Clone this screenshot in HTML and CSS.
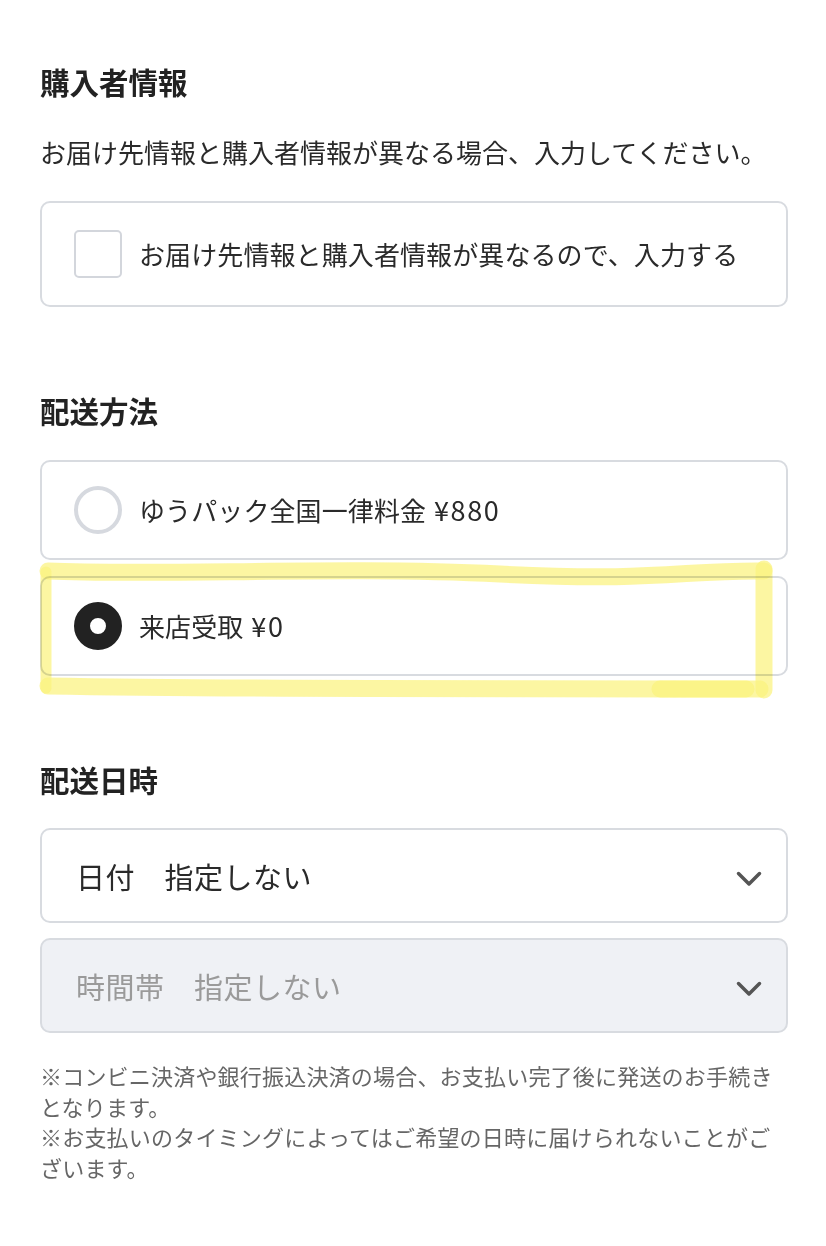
FILE: index.html
```html
<!DOCTYPE html>
<html lang="ja">
<head>
  <meta charset="UTF-8">
  <meta name="viewport" content="width=device-width, initial-scale=1.0">
  <title>購入手続き</title>
  <link rel="stylesheet" href="styles.css">
</head>
<body>

<main class="checkout">

  <!-- 購入者情報 -->
  <section class="block block-buyer">
    <h2 class="block-title">購入者情報</h2>
    <p class="block-desc">お届け先情報と購入者情報が異なる場合、入力してください。</p>
    <label class="option">
      <input type="checkbox" class="check">
      <span class="option-text">お届け先情報と購入者情報が異なるので、入力する</span>
    </label>
  </section>

  <!-- 配送方法 -->
  <section class="block">
    <h2 class="block-title">配送方法</h2>
    <div class="option-list">
      <label class="option">
        <input type="radio" name="delivery" class="radio">
        <span class="option-text">ゆうパック全国一律料金 <span class="price">¥880</span></span>
      </label>
      <div class="marked">
        <label class="option">
          <input type="radio" name="delivery" class="radio" checked>
          <span class="option-text">来店受取 <span class="price">¥0</span></span>
        </label>
        <!-- 手書きのマーカー -->
        <svg class="marker" width="736" height="140" viewBox="0 0 736 140">
          <path d="M8 9 C 120 14, 300 4, 460 12 S 640 8, 724 9" />
          <path d="M724 7 L 724 128" />
          <path d="M8 124 C 240 128, 480 126, 720 127" />
          <path class="thin" d="M6 10 L 6 126" />
          <path d="M620 127 L 706 127" />
        </svg>
      </div>
    </div>
  </section>

  <!-- 配送日時 -->
  <section class="block">
    <h2 class="block-title">配送日時</h2>
    <div class="select-list">
      <div class="select">
        <span class="select-text">日付　指定しない</span>
        <svg class="chevron" width="26" height="16" viewBox="0 0 26 16"><path d="M2.5 2.5 L13 13 L23.5 2.5" /></svg>
      </div>
      <div class="select is-disabled">
        <span class="select-text">時間帯　指定しない</span>
        <svg class="chevron" width="26" height="16" viewBox="0 0 26 16"><path d="M2.5 2.5 L13 13 L23.5 2.5" /></svg>
      </div>
    </div>
    <p class="note">※コンビニ決済や銀行振込決済の場合、お支払い完了後に発送のお手続きとなります。<br>※お支払いのタイミングによってはご希望の日時に届けられないことがございます。</p>
  </section>

</main>

</body>
</html>
```

FILE: styles.css
```css
/* 共通 */
body {
  margin: 0;
  padding: 0;
  background-color: #ffffff;
  color: #2a2a2a;
  font-family: "Noto Sans CJK JP", "Noto Sans", sans-serif;
}

.checkout {
  padding: 60px 38px 40px 40px;
}

.block {
  margin-bottom: 82px;
}

.block:last-child {
  margin-bottom: 0;
}

.block-title {
  margin: 0;
  font-size: 29.5px;
  line-height: 42px;
  font-weight: 700;
  color: #222222;
}

.block-desc {
  margin: 31px 0 30px;
  font-size: 26px;
  line-height: 38px;
  white-space: nowrap;
}

/* 選択肢カード */
.option-list {
  margin-top: 29px;
  display: flex;
  flex-direction: column;
  gap: 16px;
}

.option {
  display: flex;
  align-items: center;
  gap: 17px;
  padding: 24px 32px;
  border: 2px solid #d8dbe0;
  border-radius: 10px;
  background-color: #ffffff;
  cursor: pointer;
}

.block-buyer .option {
  padding: 27px 32px;
}

.option-text {
  font-size: 26px;
  line-height: 38px;
  white-space: nowrap;
  letter-spacing: 0.1px;
}

.price {
  margin-left: 2px;
  font-size: 27px;
  letter-spacing: 1.6px;
}

.check,
.radio {
  appearance: none;
  -webkit-appearance: none;
  margin: 0;
  flex: none;
  width: 48px;
  height: 48px;
  box-sizing: border-box;
  background-color: #ffffff;
}

.check {
  border: 2px solid #d3d6dc;
  border-radius: 5px;
}

.radio {
  border: 4px solid #d6d9df;
  border-radius: 50%;
}

.radio:checked {
  border: 16px solid #222222;
}

/* マーカー */
.marked {
  position: relative;
}

.marker {
  position: absolute;
  left: 0;
  top: -14px;
  overflow: visible;
  pointer-events: none;
  mix-blend-mode: multiply;
}

.marker path {
  fill: none;
  stroke: #fbf27e;
  stroke-opacity: 0.72;
  stroke-width: 17;
  stroke-linecap: round;
  stroke-linejoin: round;
}

.marker path.thin {
  stroke-width: 11;
}

/* セレクト */
.select-list {
  margin-top: 28px;
  display: flex;
  flex-direction: column;
  gap: 15px;
}

.select {
  display: flex;
  align-items: center;
  justify-content: space-between;
  height: 95px;
  box-sizing: border-box;
  padding: 0 24px 0 34px;
  border: 2px solid #d8dbe0;
  border-radius: 10px;
  background-color: #ffffff;
}

.select-text {
  font-size: 29px;
  line-height: 40px;
  letter-spacing: 0.5px;
  color: #2a2a2a;
}

.chevron {
  margin-top: 6px;
}

.chevron path {
  fill: none;
  stroke: #555555;
  stroke-width: 3.5;
  stroke-linecap: round;
  stroke-linejoin: round;
}

.select.is-disabled {
  background-color: #eff1f5;
}

.select.is-disabled .select-text {
  color: #9a9a9a;
}

.note {
  margin: 27px 0 0;
  font-size: 22px;
  line-height: 30.5px;
  letter-spacing: 0.2px;
  color: #666666;
}
```
